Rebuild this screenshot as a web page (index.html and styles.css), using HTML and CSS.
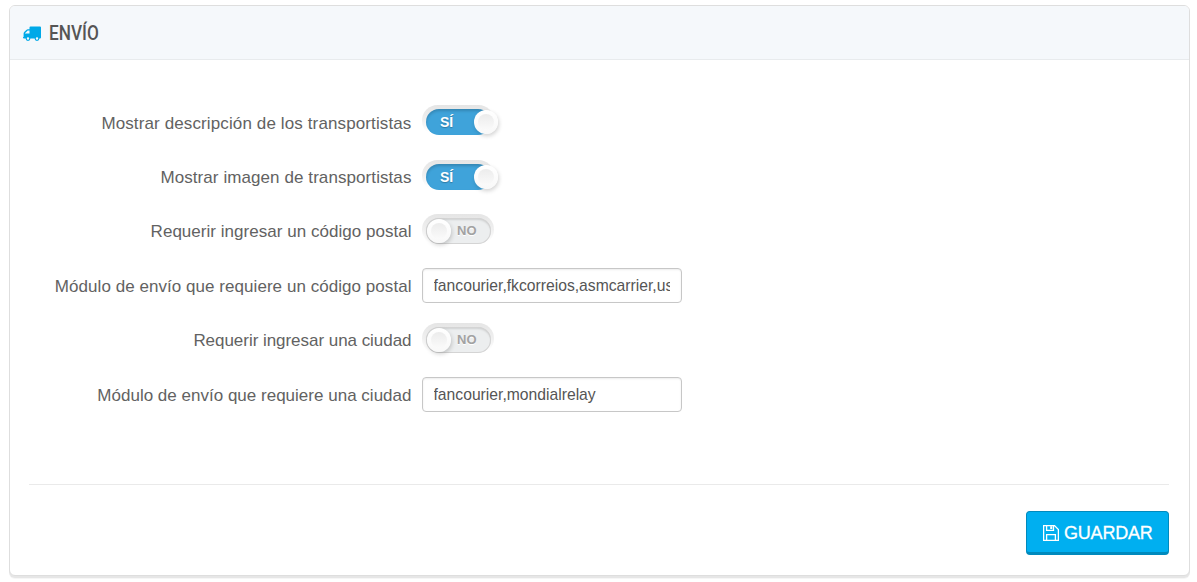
FILE: index.html
```html
<!DOCTYPE html>
<html lang="es">
<head>
<meta charset="utf-8">
<title>Envío</title>
<link rel="stylesheet" href="styles.css">
</head>
<body>
<main class="panel">
  <header class="panel-heading">
    <svg class="truck" viewBox="0 0 18 15" width="18" height="15"><path fill="#00a9e8" fill-rule="evenodd" d="M7.500.5H17a1 1 0 0 1 1 1V11.500a1 1 0 0 1-1 1h-.6a2.400 2.400 0 0 1-4.800 0H7.400a2.400 2.400 0 0 1-4.800 0H1a1 1 0 0 1-1-1V11h.6V7.500q0-.8.6-1.400L3.300 4Q4 3.300 4.800 3.300H6.500V1.500a1 1 0 0 1 1-1ZM2 7.400h4.500V4.500H4.700L2 7.200ZM5 11.300a1.200 1.200 0 1 0 0 2.400a1.200 1.200 0 1 0 0-2.400ZM14 11.300a1.200 1.200 0 1 0 0 2.400a1.200 1.200 0 1 0 0-2.400Z"/></svg>
    <h1 class="title">ENVÍO</h1>
  </header>
  <form class="form">
    <div class="row"><label class="label l1">Mostrar descripción de los transportistas</label><span class="switch on"><span class="track">SÍ</span><span class="knob"></span></span></div>
    <div class="row"><label class="label l2">Mostrar imagen de transportistas</label><span class="switch on"><span class="track">SÍ</span><span class="knob"></span></span></div>
    <div class="row"><label class="label l3">Requerir ingresar un código postal</label><span class="switch off"><span class="track">NO</span><span class="knob"></span></span></div>
    <div class="row"><label class="label l4">Módulo de envío que requiere un código postal</label><input class="field" type="text" value="fancourier,fkcorreios,asmcarrier,usps"></div>
    <div class="row"><label class="label l5">Requerir ingresar una ciudad</label><span class="switch off"><span class="track">NO</span><span class="knob"></span></span></div>
    <div class="row"><label class="label l6">Módulo de envío que requiere una ciudad</label><input class="field" type="text" value="fancourier,mondialrelay"></div>
  </form>
  <footer class="panel-footer">
    <button class="save" type="button">
      <svg viewBox="0 0 16 16" width="16" height="16" fill="none" stroke="#fff" stroke-width="1.300"><path d="M.6.6H11.500L15.400 4.500V15.400H.6ZM3.600.6V5.400H10.500V.6M3.600 15.400V9.600H12.400V15.400"/><path d="M7.200 1.200H9.300V4H7.200Z" fill="#fff" stroke="none"/></svg>
      <span class="save-text">GUARDAR</span>
    </button>
  </footer>
</main>
</body>
</html>
```
FILE: styles.css
```css
* { box-sizing: border-box; }
body {
  margin: 0;
  padding: 5px 7px 0 9px;
  height: 582px;
  overflow: hidden;
  background: #fff;
  font-family: "Liberation Sans", Arial, sans-serif;
  color: #555;
}
.panel {
  height: 571px;
  border: 1px solid #dedede;
  border-radius: 6px;
  box-shadow: 0 2px 0 #e6e6e6, 0 3px 0 #f6f6f6;
  background: #fff;
  display: flex;
  flex-direction: column;
}
.panel-heading {
  height: 54px;
  flex: none;
  display: flex;
  align-items: center;
  padding-left: 13px;
  background: #f5f8fb;
  border-bottom: 1px solid #e8ebed;
  border-radius: 5px 5px 0 0;
}
.truck { margin-top: 2px; }
.title {
  margin: 0 0 0 8px;
  font: 500 20px/24px Roboto, sans-serif;
  color: #555;
  transform: scaleX(.86);
  transform-origin: left center;
}
.form {
  display: flex;
  flex-direction: column;
  gap: 19.400px;
  padding-top: 45.200px;
}
.row {
  height: 35px;
  display: flex;
  align-items: center;
}
.label {
  width: 401.500px;
  margin-right: 10.500px;
  text-align: right;
  white-space: nowrap;
  font-size: 17px;
  line-height: 20px;
  padding-top: 2px;
  color: #626262;
}
.l1 { letter-spacing: .12px; }
.l2 { letter-spacing: .08px; }
.l3 { letter-spacing: .03px; }
.l4 { letter-spacing: .05px; }
.l5 { letter-spacing: -.04px; }
.l6 { letter-spacing: .01px; }
.field {
  width: 260px;
  height: 35px;
  padding: 1px 11px 0 10.500px;
  border: 1px solid #c7c7c7;
  border-radius: 4px;
  box-shadow: inset 0 1px 2px rgba(0,0,0,.08);
  background: #fff;
  font: 15.700px "Liberation Sans", Arial, sans-serif;
  color: #555;
}
.switch {
  position: relative;
  width: 72px;
  height: 31px;
  padding: 4px 3px 0 4px;
  border-radius: 16px;
  align-self: flex-start;
  background: linear-gradient(#e5e5e5, #f0f0f0 50%, #fff 88%);
}
.track {
  display: block;
  height: 26px;
  border-radius: 13px;
  font-size: 13px;
  line-height: 26px;
  font-weight: bold;
}
.on .track {
  padding-left: 14px;
  color: #fff;
  background: #3fa3da;
  box-shadow: inset 0 2px 3px rgba(0,0,0,.18);
  text-shadow: 0 1px 1px rgba(0,0,0,.25);
  font-size: 14px;
}
.off .track {
  padding-left: 31px;
  color: #a2a2a2;
  background: #eceeef;
  box-shadow: inset 0 0 0 1px #d4d4d4, inset 0 2px 2px rgba(0,0,0,.12);
  text-shadow: 0 1px #fff;
}
.knob {
  position: absolute;
  top: 5px;
  width: 24px;
  height: 24px;
  border-radius: 50%;
  background: linear-gradient(#fff, #f8f8f8);
  box-shadow: 1px 2px 4px rgba(0,0,0,.18);
}
.on .knob { left: 52px; }
.off .knob { left: 5px; }
.knob::after {
  content: "";
  position: absolute;
  inset: 4px;
  border-radius: 50%;
  background: linear-gradient(#ececec, #fafafa);
}
.panel-footer {
  margin: auto 20px 20px 19px;
  height: 71px;
  border-top: 1px solid #eaeaea;
  display: flex;
  justify-content: flex-end;
  align-items: flex-end;
}
.save {
  width: 143px;
  height: 44px;
  display: flex;
  align-items: center;
  padding: 0 0 1px 16px;
  gap: 5px;
  border: 1px solid #008abd;
  border-bottom-width: 3px;
  border-radius: 4px;
  background: #00aff0;
  color: #fff;
  font: 18px/20px "Liberation Sans", Arial, sans-serif;
  -webkit-text-stroke: .3px #fff;
  letter-spacing: -.2px;
}
.save svg { margin-top: 2px; }
.save-text { padding-top: 2px; }
```
